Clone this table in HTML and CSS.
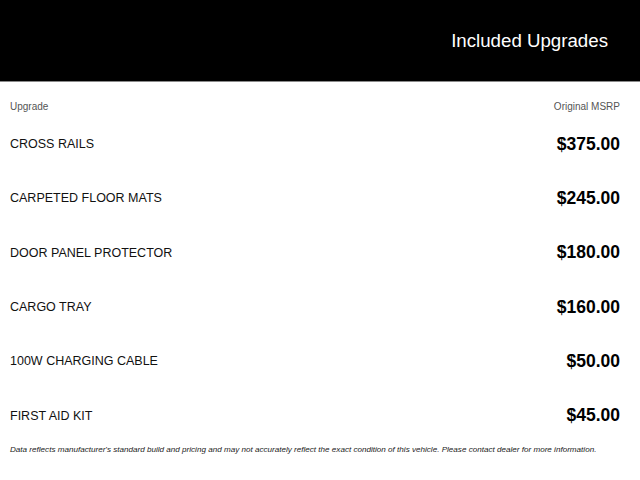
FILE: index.html
```html
<!DOCTYPE html>
<html>
<head>
<meta charset="utf-8">
<link rel="stylesheet" href="styles.css">
</head>
<body>
<header class="header">
  <h1 class="title">Included Upgrades</h1>
</header>
<main class="content">
  <div class="labels">
    <span>Upgrade</span>
    <span>Original MSRP</span>
  </div>
  <ul class="list">
    <li class="row"><span class="name">CROSS RAILS</span><span class="price">$375.00</span></li>
    <li class="row"><span class="name">CARPETED FLOOR MATS</span><span class="price">$245.00</span></li>
    <li class="row"><span class="name">DOOR PANEL PROTECTOR</span><span class="price">$180.00</span></li>
    <li class="row"><span class="name">CARGO TRAY</span><span class="price">$160.00</span></li>
    <li class="row"><span class="name">100W CHARGING CABLE</span><span class="price">$50.00</span></li>
    <li class="row"><span class="name">FIRST AID KIT</span><span class="price">$45.00</span></li>
  </ul>
  <p class="note">Data reflects manufacturer's standard build and pricing and may not accurately reflect the exact condition of this vehicle. Please contact dealer for more information.</p>
</main>
</body>
</html>
```
FILE: styles.css
```css
* { box-sizing: border-box; }
html, body { margin: 0; padding: 0; background: #fff; }
body { font-family: "Liberation Sans", Arial, sans-serif; color: #111; }
.header {
  height: 82px;
  background: #000;
  border-bottom: 1px solid #8a8a8a;
  display: flex;
  justify-content: flex-end;
  align-items: center;
  padding: 2px 32px 0 0;
}
.title {
  margin: 0;
  font-size: 18.7px;
  font-weight: normal;
  color: #fff;
  line-height: 1;
}
.content { padding: 0 20px 0 10px; }
.labels {
  display: flex;
  justify-content: space-between;
  font-size: 10px;
  line-height: 12px;
  color: #555;
  padding-top: 19px;
  height: 35px;
}
.list { list-style: none; margin: 0; padding: 0; }
.row {
  height: 54.3px;
  display: flex;
  justify-content: space-between;
  align-items: center;
}
.name { font-size: 12.5px; color: #111; }
.price { font-size: 17.5px; font-weight: bold; color: #000; }
.note {
  margin: 2px 0 0;
  font-size: 8.1px;
  line-height: 10px;
  font-style: italic;
  color: #222;
}
```
